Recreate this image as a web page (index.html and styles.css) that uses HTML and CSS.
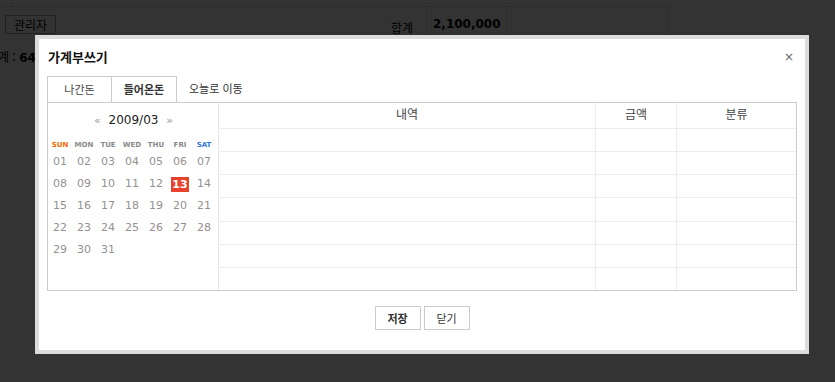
FILE: index.html
```html
<!DOCTYPE html>
<html lang="ko">
<head>
    <meta charset="UTF-8">
    <title>가계부</title>
    <link rel="stylesheet" href="styles.css">
</head>
<body>
    <div class="page">
        <div class="top-strip"><span class="strip-cell"></span></div>
        <div class="sum-row">
            <div class="sum-label">
                <button type="button" class="admin">관리자</button>
                <span>합계</span>
            </div>
            <div class="sum-value">2,100,000</div>
            <div class="sum-empty"></div>
        </div>
        <div class="total-line">합계 : <b>640,000</b></div>
    </div>

    <div class="overlay"></div>

    <div class="modal">
        <div class="modal-head">
            <h1>가계부쓰기</h1>
            <span class="close">×</span>
        </div>
        <div class="tabs">
            <a class="tab">나간돈</a>
            <a class="tab active">들어온돈</a>
            <a class="today">오늘로 이동</a>
        </div>
        <div class="box">
            <div class="calendar">
                <div class="cal-title"><span class="arrow">«</span> 2009/03 <span class="arrow">»</span></div>
                <div class="cal-grid week">
                    <span class="sun">SUN</span><span>MON</span><span>TUE</span><span>WED</span><span>THU</span><span>FRI</span><span class="sat">SAT</span>
                </div>
                <div class="cal-grid days">
                    <span>01</span><span>02</span><span>03</span><span>04</span><span>05</span><span>06</span><span>07</span>
                    <span>08</span><span>09</span><span>10</span><span>11</span><span>12</span><span><em class="today-mark">13</em></span><span>14</span>
                    <span>15</span><span>16</span><span>17</span><span>18</span><span>19</span><span>20</span><span>21</span>
                    <span>22</span><span>23</span><span>24</span><span>25</span><span>26</span><span>27</span><span>28</span>
                    <span>29</span><span>30</span><span>31</span>
                </div>
            </div>
            <table class="entries">
                <thead>
                    <tr><th class="c1">내역</th><th class="c2">금액</th><th class="c3">분류</th></tr>
                </thead>
                <tbody>
                    <tr><td></td><td></td><td></td></tr>
                    <tr><td></td><td></td><td></td></tr>
                    <tr><td></td><td></td><td></td></tr>
                    <tr><td></td><td></td><td></td></tr>
                    <tr><td></td><td></td><td></td></tr>
                    <tr><td></td><td></td><td></td></tr>
                    <tr class="last"><td></td><td></td><td></td></tr>
                </tbody>
            </table>
        </div>
        <div class="buttons">
            <button type="button" class="save">저장</button>
            <button type="button">닫기</button>
        </div>
    </div>
</body>
</html>
```

FILE: styles.css
```css
body {
    margin: 0;
    padding: 0;
    background-color: #fff;
    font-family: "Noto Sans CJK KR", "Noto Sans", sans-serif;
    color: #000;
    width: 835px;
    height: 382px;
    overflow: hidden;
    position: relative;
}

/* page behind the dialog */
.page {
    width: 835px;
}
.top-strip {
    height: 6px;
    width: 669px;
    border-bottom: 1px solid #ddd;
    display: flex;
}
.strip-cell {
    width: 12px;
    border-right: 1px solid #ddd;
}
.sum-row {
    display: flex;
    height: 40px;
}
.sum-label {
    width: 427px;
    border-right: 1px solid #ddd;
    display: flex;
    justify-content: space-between;
    align-items: flex-start;
    box-sizing: border-box;
    padding: 8px 13px 0 5px;
    font-size: 12px;
    line-height: 20px;
}
.sum-label span {
    padding-top: 3px;
}
.admin {
    width: 51px;
    height: 19px;
    border: 1px solid #aaa;
    background: #fff;
    font-family: "Noto Sans CJK KR", sans-serif;
    font-size: 12px;
    line-height: 15px;
    padding: 0;
    color: #000;
}
.sum-value {
    width: 80px;
    border-right: 1px solid #ddd;
    padding: 10px 0 0 6px;
    box-sizing: border-box;
    font-family: "DejaVu Sans", sans-serif;
    font-weight: bold;
    font-size: 12px;
}
.sum-empty {
    width: 160px;
    border-right: 1px solid #ddd;
}
.total-line {
    margin-left: -13px;
    margin-top: 2px;
    font-size: 12px;
    line-height: 16px;
}
.total-line b {
    font-family: "DejaVu Sans", sans-serif;
}

.overlay {
    position: absolute;
    top: 0;
    left: 0;
    right: 0;
    bottom: 0;
    background: rgba(0, 0, 0, 0.8);
}

/* dialog */
.modal {
    position: absolute;
    left: 35px;
    top: 35px;
    width: 750px;
    height: 311px;
    border: 4px solid #dcdcdc;
    background: #fff;
    padding: 0 8px;
    box-sizing: content-box;
    display: flex;
    flex-direction: column;
}
.modal-head {
    position: relative;
    padding-top: 10px;
}
.modal-head h1 {
    margin: 0 0 0 1px;
    font-size: 13px;
    line-height: 16px;
    color: #111;
}
.close {
    position: absolute;
    right: 3px;
    top: 12px;
    font-family: "DejaVu Sans", sans-serif;
    font-size: 12px;
    line-height: 12px;
    color: #666;
}
.tabs {
    display: flex;
    margin-top: 11px;
    height: 26px;
}
.tab {
    width: 65px;
    box-sizing: border-box;
    border: 1px solid #ccc;
    border-bottom: none;
    text-align: center;
    font-size: 11px;
    line-height: 24px;
    color: #444;
}
.tab.active {
    border-left: none;
    width: 65px;
    font-weight: bold;
    color: #333;
}
.today {
    margin-left: 12px;
    font-size: 11px;
    line-height: 24px;
    color: #333;
}
.box {
    width: 750px;
    height: 189px;
    box-sizing: border-box;
    border: 1px solid #ccc;
    display: flex;
}

/* calendar */
.calendar {
    width: 170px;
    padding-top: 9px;
    font-family: "DejaVu Sans", Verdana, sans-serif;
}
.cal-title {
    text-align: center;
    font-size: 12px;
    line-height: 16px;
    color: #222;
    word-spacing: 4px;
    padding-left: 1px;
}
.arrow {
    color: #999;
    font-size: 11px;
}
.cal-grid {
    display: grid;
    grid-template-columns: repeat(7, 24px);
    text-align: center;
}
.week {
    margin-top: 10px;
    font-size: 7px;
    line-height: 12px;
    font-weight: bold;
    color: #8a8a8a;
}
.week .sun {
    color: #f26a00;
}
.week .sat {
    color: #3278e0;
}
.days {
    font-size: 11px;
    line-height: 22px;
    color: #968f8f;
}
.today-mark {
    display: inline-block;
    width: 18px;
    height: 15px;
    line-height: 15px;
    margin-top: 4px;
    background: #e8412c;
    color: #fff;
    font-style: normal;
    font-weight: bold;
    vertical-align: top;
}

/* entries table */
.entries {
    width: 578px;
    border-collapse: collapse;
    border-left: 1px solid #e6e6e6;
}
.entries th {
    height: 25px;
    padding: 0;
    font-weight: normal;
    font-size: 12px;
    color: #444;
    border-bottom: 1px solid #ececec;
    border-left: 1px solid #ececec;
    vertical-align: top;
    line-height: 22px;
}
.entries .c1 {
    width: 376px;
    border-left: none;
}
.entries .c2 {
    width: 80px;
}
.entries td {
    height: 22px;
    padding: 0;
    border-bottom: 1px solid #ececec;
    border-left: 1px solid #ececec;
}
.entries td:first-child {
    border-left: none;
}
.entries .last td {
    border-bottom: none;
}

.buttons {
    margin-top: 15px;
    display: flex;
    justify-content: center;
    gap: 3px;
}
.buttons button {
    width: 46px;
    height: 24px;
    padding: 0;
    border: 1px solid #ccc;
    background: #fff;
    font-family: "Noto Sans CJK KR", sans-serif;
    font-size: 11px;
    color: #333;
    cursor: pointer;
}
.buttons .save {
    font-weight: bold;
}
```
